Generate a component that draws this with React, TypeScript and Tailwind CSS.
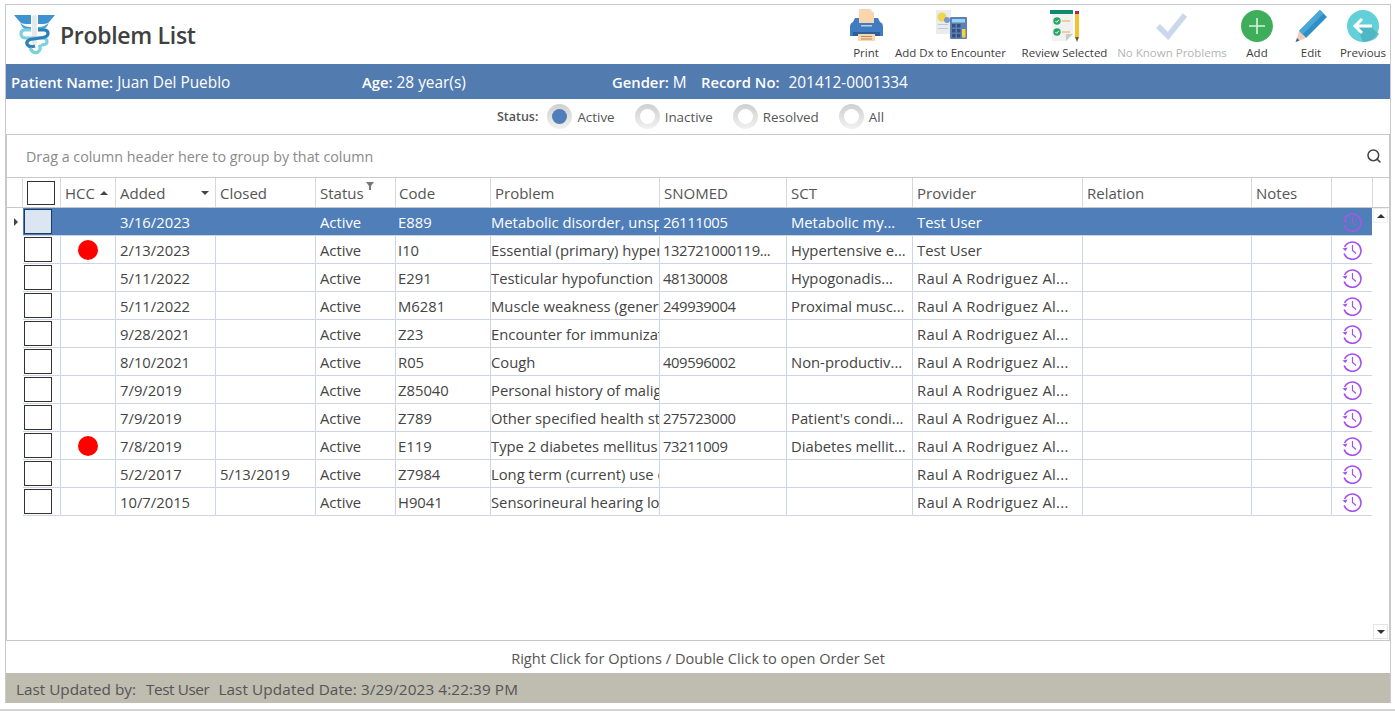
import { Search } from "lucide-react";

const cols = [
  "w-[38px]",
  "w-[55px]",
  "w-[100px]",
  "w-[100px]",
  "w-[80px]",
  "w-[95px]",
  "w-[169px]",
  "w-[127px]",
  "w-[126px]",
  "w-[170px]",
  "w-[169px]",
  "w-[80px]",
  "w-[41px]",
];

const cellPad = ["pl-[4px]", "pl-[4px]", "pl-[4px]", "pl-[4px]", "pl-[4px]", "pl-[2px]", "pl-0", "pl-[3px]", "pl-[4px]", "pl-[4px]", "pl-[4px]", "pl-[4px]", "pl-[4px]"];

const RRA = "Raul A Rodriguez Al...";

const rows = [
  { hcc: false, added: "3/16/2023", closed: "", code: "E889", problem: "Metabolic disorder, unspecified", snomed: "26111005", sct: "Metabolic my...", provider: "Test User" },
  { hcc: true, added: "2/13/2023", closed: "", code: "I10", problem: "Essential (primary) hypertension", snomed: "132721000119...", sct: "Hypertensive e...", provider: "Test User" },
  { hcc: false, added: "5/11/2022", closed: "", code: "E291", problem: "Testicular hypofunction", snomed: "48130008", sct: "Hypogonadis...", provider: RRA },
  { hcc: false, added: "5/11/2022", closed: "", code: "M6281", problem: "Muscle weakness (generalized)", snomed: "249939004", sct: "Proximal musc...", provider: RRA },
  { hcc: false, added: "9/28/2021", closed: "", code: "Z23", problem: "Encounter for immunization", snomed: "", sct: "", provider: RRA },
  { hcc: false, added: "8/10/2021", closed: "", code: "R05", problem: "Cough", snomed: "409596002", sct: "Non-productiv...", provider: RRA },
  { hcc: false, added: "7/9/2019", closed: "", code: "Z85040", problem: "Personal history of malignant", snomed: "", sct: "", provider: RRA },
  { hcc: false, added: "7/9/2019", closed: "", code: "Z789", problem: "Other specified health status", snomed: "275723000", sct: "Patient's condi...", provider: RRA },
  { hcc: true, added: "7/8/2019", closed: "", code: "E119", problem: "Type 2 diabetes mellitus without", snomed: "73211009", sct: "Diabetes mellit...", provider: RRA },
  { hcc: false, added: "5/2/2017", closed: "5/13/2019", code: "Z7984", problem: "Long term (current) use of", snomed: "", sct: "", provider: RRA },
  { hcc: false, added: "10/7/2015", closed: "", code: "H9041", problem: "Sensorineural hearing loss", snomed: "", sct: "", provider: RRA },
];

const Logo = () => (
  <svg width="41" height="40" viewBox="0 0 41 40" fill="none">
    <path d="M0 0 H17 V9 H12 Q7 9 5 6 Z" fill="#3d93cf" />
    <path d="M41 0 H24 V9 H29 Q34 9 36 6 Z" fill="#3d93cf" />
    <path d="M6 7 Q9 12 17 12 V14 H11 Q8 13 6 7 Z" fill="#4ba3dc" />
    <path d="M35 7 Q32 12 24 12 V14 H30 Q33 13 35 7 Z" fill="#4ba3dc" />
    <rect x="18" y="0" width="5" height="30" rx="2.5" fill="#e6e8ea" />
    <path d="M17 15 H11 Q7 15 7 18.5 Q7 23 12 23 H27 Q33 23 33 26.5 Q33 30 27 30" stroke="#7dd0de" strokeWidth="3.2" />
    <path d="M24 15 H30 Q34 15 34 18.5 Q34 21.5 29 22.5 L16 24.5 Q12 26 13 29 Q15 33 21 31" stroke="#2f7fb8" strokeWidth="3.2" />
    <path d="M16 33 Q19 39.5 24 37 Q28 34 25 30" stroke="#7dd0de" strokeWidth="3.2" />
  </svg>
);

const PrintIcon = () => (
  <svg width="33" height="33" viewBox="0 0 33 33">
    <path d="M9 0 H20 L24 4 V14 H9 Z" fill="#fbd5ae" />
    <path d="M20 0 L24 4 H20 Z" fill="#e8e0d4" />
    <path d="M5 9 H28 L30 13 Q33 14 33 18 V27 H0 V18 Q0 14 3 13 Z" fill="#3f7cc0" />
    <rect x="9" y="9" width="15" height="5" fill="#fbd5ae" />
    <rect x="3" y="23" width="27" height="4" fill="#2c5f96" />
    <rect x="11" y="16" width="11" height="1.5" fill="#b5cfe8" />
    <path d="M8 25 H25 V32 H8 Z" fill="#fbd5ae" />
    <rect x="11" y="27" width="11" height="1" fill="#b78a5f" />
    <rect x="11" y="29.5" width="11" height="1" fill="#b78a5f" />
  </svg>
);

const DxIcon = () => (
  <svg width="33" height="31" viewBox="-2 0 33 31">
    <rect x="0" y="0" width="15" height="24" fill="#e9ecef" />
    <circle cx="6" cy="7" r="4.5" fill="#f1d44f" />
    <circle cx="11" cy="10" r="3" fill="#7f97c6" />
    <rect x="2" y="14" width="10" height="1" fill="#c3c8cc" />
    <rect x="2" y="18" width="10" height="1" fill="#c3c8cc" />
    <rect x="14" y="7" width="17" height="22" rx="1" fill="#5f7fb4" />
    <rect x="16" y="9" width="13" height="3.5" fill="#8fd8f2" />
    <rect x="16" y="14" width="3.5" height="3.5" fill="#34507f" />
    <rect x="21" y="14" width="3.5" height="3.5" fill="#34507f" />
    <rect x="16" y="19" width="3.5" height="3.5" fill="#34507f" />
    <rect x="21" y="19" width="3.5" height="3.5" fill="#34507f" />
    <rect x="16" y="24" width="3.5" height="3.5" fill="#34507f" />
    <rect x="21" y="24" width="3.5" height="3.5" fill="#34507f" />
    <rect x="26" y="19" width="3.5" height="8.5" fill="#f5d53f" />
  </svg>
);

const ReviewIcon = () => (
  <svg width="33" height="32" viewBox="-2 0 33 32">
    <path d="M0 0 H23 V24 L16 31 H2 V3 H0 Z" fill="#f0f1f1" />
    <rect x="0" y="0" width="23" height="4" fill="#0f8a6c" />
    <path d="M16 31 V24 H23 Z" fill="#c9cccc" />
    <circle cx="7" cy="11" r="3.7" fill="#27a567" />
    <circle cx="7" cy="22" r="3.7" fill="#27a567" />
    <path d="M5.4 11 L6.7 12.3 L8.8 9.8 M5.4 22 L6.7 23.3 L8.8 20.8" stroke="#fff" strokeWidth="1" fill="none" />
    <rect x="12" y="10.5" width="8" height="1" fill="#eda94a" />
    <rect x="12" y="21.5" width="8" height="1" fill="#eda94a" />
    <rect x="25" y="1" width="4" height="3" fill="#c2185b" />
    <rect x="25" y="4" width="4" height="23" fill="#f2c230" />
    <path d="M25 27 H29 L27 32 Z" fill="#6b5a2a" />
  </svg>
);

const CheckIcon = () => (
  <svg width="32" height="28" viewBox="0 0 32 28">
    <path d="M2 14 L12 24 L29 3" stroke="#c9d8ea" strokeWidth="5.5" fill="none" />
  </svg>
);

const AddIcon = () => (
  <svg width="32" height="32" viewBox="0 0 32 32">
    <circle cx="16" cy="16" r="16" fill="#3fae5a" />
    <path d="M16 8 V24 M8 16 H24" stroke="#d9f2df" strokeWidth="1.6" />
  </svg>
);

const EditIcon = () => (
  <svg width="33" height="33" viewBox="0 0 33 33">
    <path d="M25 1 L32 8 L11 29 L4 22 Z" fill="#2f8fc4" />
    <path d="M25 1 L28.5 4.5 L7.5 25.5 L4 22 Z" fill="#4aa8d8" />
    <path d="M4 22 L11 29 L1 33 Z" fill="#f6c9b4" />
    <path d="M2 29 L4.5 31.5 L0.5 33 Z" fill="#1f6f9e" />
  </svg>
);

const PrevIcon = () => (
  <svg width="32" height="32" viewBox="0 0 32 32">
    <circle cx="16" cy="16" r="16" fill="#62cfd9" />
    <path d="M10 17 L24 17 L32 24 Q28 32 16 32 Z" fill="#4ab0bd" opacity="0.8" />
    <path d="M15 9 L8 16 L15 23 M8 16 H25" stroke="#fff" strokeWidth="3" fill="none" />
  </svg>
);

const HistoryIcon = ({ dim }: { dim?: boolean }) => (
  <svg width="20" height="20" viewBox="0 0 20 20" fill="none" stroke={dim ? "#a855e8" : "#a64ff0"} strokeWidth="1.6">
    <path d="M2.6 7 A8.6 8.6 0 1 1 2.2 13.4" />
    <path d="M0.4 8.6 L3.6 11 L5.6 7.6 Z" fill={dim ? "#a855e8" : "#a64ff0"} stroke="none" />
    <path d="M10.5 5 V10.5 L14 13.5" strokeWidth="1.2" />
  </svg>
);

const ToolBtn = ({ icon, label, cls, disabled }: { icon: React.ReactNode; label: string; cls: string; disabled?: boolean }) => (
  <div className={`flex flex-col items-center ${cls}`}>
    <div className="h-[37px] flex items-center justify-center">{icon}</div>
    <span className={`text-[11.5px] leading-[16px] whitespace-nowrap mt-[1px] ${disabled ? "text-[#b4b4b4]" : "text-[#3c3c3c]"}`}>{label}</span>
  </div>
);

const Radio = ({ label, on }: { label: string; on?: boolean }) => (
  <div className="flex items-center gap-[5px]">
    <div className="w-[25px] h-[25px] rounded-full bg-gradient-to-b from-[#cfcfcf] to-[#f1f1f1] flex items-center justify-center">
      <div className={`w-[15px] h-[15px] rounded-full ${on ? "bg-[#4f7eb8]" : "bg-white"}`} />
    </div>
    <span className="text-[13.4px] text-[#555] mt-[2px]">{label}</span>
  </div>
);

export default function App() {
  const headers = ["", "HCC", "Added", "Closed", "Status", "Code", "Problem", "SNOMED", "SCT", "Provider", "Relation", "Notes", ""];

  return (
    <div className="w-[1395px] h-[711px] bg-white overflow-hidden pt-1 pl-[5px] text-[#444] font-['Open_Sans',sans-serif]">
      <div className="w-[1386px] border border-[#c9c9c9] border-b-0">
        {/* toolbar */}
        <div className="h-[59px] flex justify-between">
          <div className="flex items-center pl-[8px] pt-[1px] gap-[5px]">
            <Logo />
            <span className="text-[23px] font-semibold text-[#404040] tracking-[-0.3px]">Problem List</span>
          </div>
          <div className="flex pt-[2px]">
            <ToolBtn icon={<PrintIcon />} label="Print" cls="w-[48px]" />
            <ToolBtn icon={<DxIcon />} label="Add Dx to Encounter" cls="w-[113px] ml-[4px]" />
            <ToolBtn icon={<ReviewIcon />} label="Review Selected" cls="w-[97px] ml-[9px]" />
            <ToolBtn icon={<CheckIcon />} label="No Known Problems" cls="w-[110px] ml-[4px]" disabled />
            <ToolBtn icon={<AddIcon />} label="Add" cls="w-[34px] ml-[13px]" />
            <ToolBtn icon={<EditIcon />} label="Edit" cls="w-[34px] ml-[20px]" />
            <ToolBtn icon={<PrevIcon />} label="Previous" cls="w-[50px] ml-[10px] mr-[2px]" />
          </div>
        </div>

        {/* patient bar */}
        <div className="h-[35px] bg-[#527bb0] flex items-center text-white text-[15.4px] pl-[5px] pt-[2px]">
          <div className="w-[351px]"><b className="font-semibold text-[14.8px]">Patient Name:</b> Juan Del Pueblo</div>
          <div className="w-[250px]"><b className="font-semibold text-[14.8px]">Age:</b> 28 year(s)</div>
          <div className="w-[89px]"><b className="font-semibold text-[14.8px]">Gender:</b> M</div>
          <div><b className="font-semibold text-[14.8px]">Record No:</b> <span className="ml-[5px]">201412-0001334</span></div>
        </div>

        {/* status filter */}
        <div className="h-[36px] flex items-center justify-center gap-[20px] border-b border-[#c9c9c9] pr-[15px]">
          <div className="flex items-center gap-[9px]">
            <span className="text-[12.5px] font-semibold text-[#555] mt-[2px]">Status:</span>
            <Radio label="Active" on />
          </div>
          <Radio label="Inactive" />
          <Radio label="Resolved" />
          <Radio label="All" />
        </div>

        {/* grid */}
        <div className="h-[506px] border border-t-0 border-[#c9c9c9]">
          <div className="h-[43px] flex items-center justify-between pl-[19px] pr-[7px] border-b border-[#c9c9c9] text-[14.3px] text-[#8a8a8a]">
            <span className="mt-[2px]">Drag a column header here to group by that column</span>
            <Search size={16} color="#444" strokeWidth={2.3} />
          </div>

          <div className="h-[30px] flex border-b border-[#c9c9c9]">
            <div className="w-[16px] border-r border-[#d8d8d8]" />
            {headers.map((h, i) => (
              <div key={i} className={`${cols[i]} relative shrink-0 flex items-center ${i === 5 ? "pl-[3px]" : "pl-[4px]"} ${h ? "pt-[1px]" : ""} border-r border-[#d8d8d8] text-[15px] text-[#555]`}>
                {i === 0 && <div className="w-[28px] h-[24px] border border-[#333] bg-white" />}
                {h}
                {h === "HCC" && <div className="absolute right-[7px] top-[13px] border-x-[4px] border-x-transparent border-b-[4px] border-b-[#444]" />}
                {h === "Added" && <div className="absolute right-[6px] top-[13px] border-x-[4px] border-x-transparent border-t-[4px] border-t-[#444]" />}
                {h === "Status" && (
                  <svg className="absolute right-[21px] top-[4px]" width="8" height="9" viewBox="0 0 8 9">
                    <path d="M0 0 H8 L5 4 V8 L3 8 V4 Z" fill="#777" />
                  </svg>
                )}
              </div>
            ))}
          </div>

          <div className="h-[432px] flex overflow-hidden">
            <div className="w-[16px] shrink-0 flex justify-center">
              <div className="mt-[10px] ml-[1px] h-0 border-y-[4px] border-y-transparent border-l-[4px] border-l-[#444]" />
            </div>
            <div className="w-[1349px] shrink-0">
              {rows.map((r, i) => {
                const sel = i === 0;
                const line = sel ? "border-[#4f7eb8]" : "border-[#ccd6e2]";
                const cells = [
                  null,
                  r.hcc ? <div className="w-[20px] h-[20px] rounded-full bg-[#ff0000] ml-[13px]" /> : null,
                  r.added, r.closed, "Active", r.code, r.problem,
                  <span className="tracking-[-0.4px]">{r.snomed}</span>,
                  r.sct,
                  <span className={r.provider === RRA ? "tracking-[0.3px]" : ""}>{r.provider}</span>,
                  "", "",
                  null,
                ];
                return (
                  <div key={i} className={`h-[28px] flex border-b border-[#ccd6e2] text-[14.8px] ${sel ? "bg-[#4f7eb8] text-white" : "text-[#444]"}`}>
                    {cells.map((c, j) => (
                      <div key={j} className={`${cols[j]} ${cellPad[j]} shrink-0 flex items-center overflow-hidden whitespace-nowrap ${j > 1 && j < 12 ? "pt-[1px]" : ""} ${j === 12 ? "" : "border-r"} ${line}`}>
                        {j === 0 && <div className={`w-[28px] h-[25px] border ${sel ? "border-[#1f3a5f] bg-[#dce6f2]" : "border-[#333] bg-white"} -ml-[3px] -mt-[1px]`} />}
                        {j === 12 ? <div className="ml-[6px] mt-[1px]"><HistoryIcon dim={sel} /></div> : c}
                      </div>
                    ))}
                  </div>
                );
              })}
            </div>
            <div className="w-[17px] shrink-0 flex flex-col justify-between items-center pb-[1px]">
              <div className="w-[15px] h-[15px] border border-[#eee] flex items-center justify-center">
                <div className="border-x-[4px] border-x-transparent border-b-[4px] border-b-[#333]" />
              </div>
              <div className="w-[15px] h-[15px] border border-[#e4e4e4] flex items-center justify-center">
                <div className="border-x-[4px] border-x-transparent border-t-[4px] border-t-[#333]" />
              </div>
            </div>
          </div>
        </div>

        <div className="h-[32px] flex items-center justify-center text-[14.6px] text-[#555] pt-[4px]">
          Right Click for Options / Double Click to open Order Set
        </div>
        <div className="h-[30px] bg-[#bfbcb0] flex items-center pl-[10px] text-[15.3px] text-[#555] pt-[2px]">
          <span>Last Updated by:</span>
          <span className="ml-[10px] tracking-[-0.4px]">Test User</span>
          <span className="ml-[9px] tracking-[0.1px]">Last Updated Date: 3/29/2023 4:22:39 PM</span>
        </div>
      </div>
      <div className="-ml-[5px] mt-[6px] h-[2px] w-[1395px] bg-[#d4d4d4]" />
    </div>
  );
}
